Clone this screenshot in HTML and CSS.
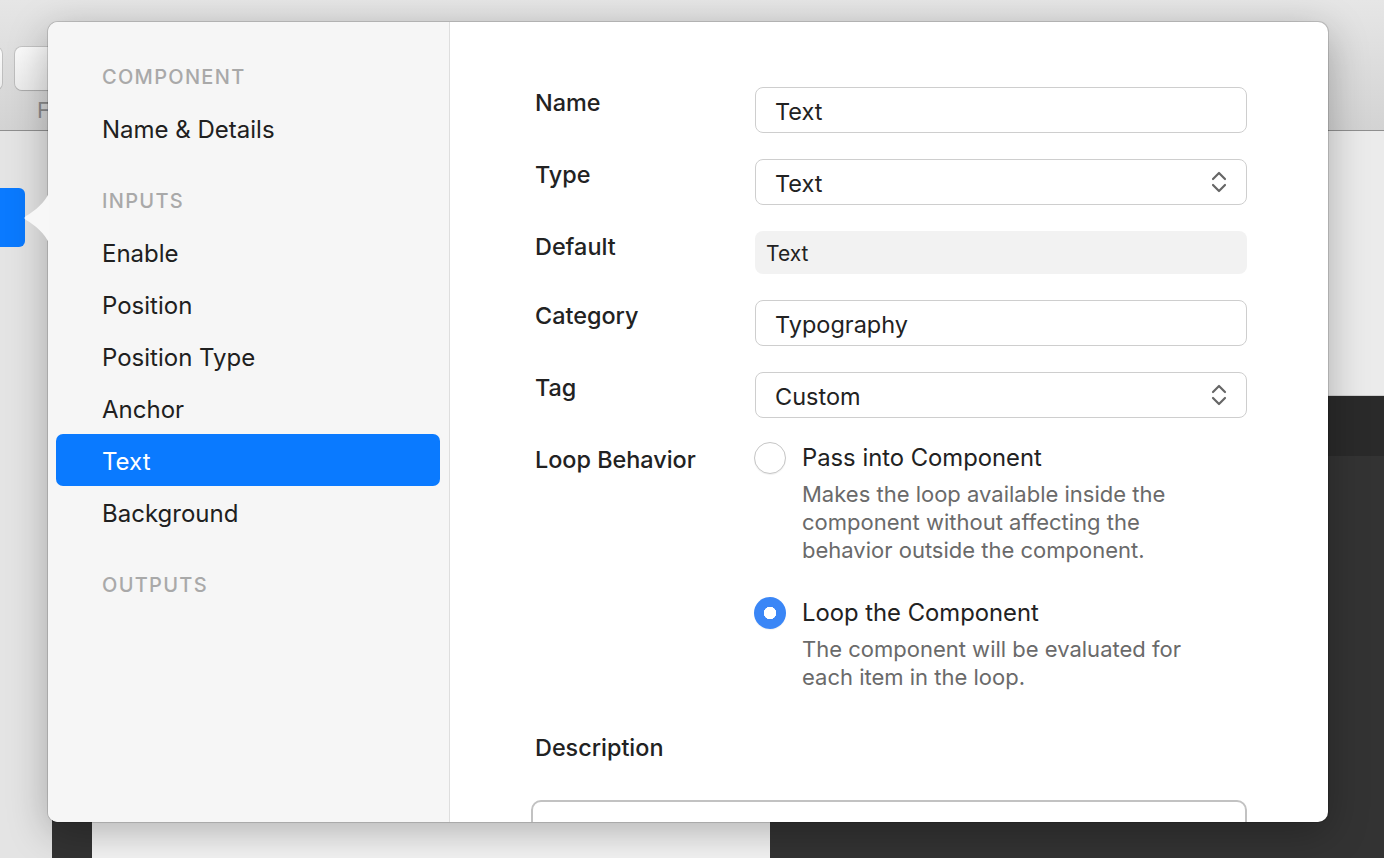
FILE: index.html
```html
<!DOCTYPE html>
<html lang="en">
<head>
<meta charset="utf-8">
<title>Component Inputs</title>
<link rel="stylesheet" href="styles.css">
</head>
<body>
<div class="desk">
  <header class="toolbar">
    <div class="tb-btn tb-edge"></div>
    <div class="tb-group">
      <div class="tb-btn"></div>
      <span class="tb-label">Frame</span>
    </div>
  </header>
  <div class="main">
    <aside class="rail"><div class="rail-tab"></div></aside>
    <div class="stage"><div class="canvas"></div></div>
    <div class="inspector">
      <div class="insp-top"></div>
      <div class="insp-head"></div>
      <div class="insp-body"></div>
    </div>
  </div>
</div>

<svg class="pop-arrow" width="26" height="50" viewBox="0 0 26 50" aria-hidden="true">
  <path d="M26 0 C22 9 12 18 3 23 Q0 25 3 27 C12 32 22 41 26 50 Z" fill="#f7f7f7"/>
</svg>

<div class="popover">
  <nav class="side">
    <div class="side-head side-head-first">COMPONENT</div>
    <div class="side-item">Name &amp; Details</div>
    <div class="side-head">INPUTS</div>
    <div class="side-item side-item-first">Enable</div>
    <div class="side-item">Position</div>
    <div class="side-item">Position Type</div>
    <div class="side-item">Anchor</div>
    <div class="side-item is-selected">Text</div>
    <div class="side-item">Background</div>
    <div class="side-head">OUTPUTS</div>
  </nav>

  <section class="content">
    <div class="form">
      <div class="label">Name</div>
      <div class="field">Text</div>

      <div class="label">Type</div>
      <div class="field field-select">
        <span>Text</span>
        <svg class="chev" width="16" height="24" viewBox="0 0 16 24" aria-hidden="true">
          <path d="M2 9 L8 3 L14 9 M2 15 L8 21 L14 15" fill="none" stroke="#666" stroke-width="2.2" stroke-linecap="round" stroke-linejoin="round"/>
        </svg>
      </div>

      <div class="label">Default</div>
      <div class="field field-static">Text</div>

      <div class="label">Category</div>
      <div class="field">Typography</div>

      <div class="label">Tag</div>
      <div class="field field-select">
        <span>Custom</span>
        <svg class="chev" width="16" height="24" viewBox="0 0 16 24" aria-hidden="true">
          <path d="M2 9 L8 3 L14 9 M2 15 L8 21 L14 15" fill="none" stroke="#666" stroke-width="2.2" stroke-linecap="round" stroke-linejoin="round"/>
        </svg>
      </div>

      <div class="label">Loop Behavior</div>
      <div class="options">
        <div class="option">
          <span class="radio"></span>
          <div class="opt-text">
            <div class="opt-title">Pass into Component</div>
            <div class="opt-desc">Makes the loop available inside the<br>component without affecting the<br>behavior outside the component.</div>
          </div>
        </div>
        <div class="option option-second">
          <span class="radio radio-on"></span>
          <div class="opt-text">
            <div class="opt-title">Loop the Component</div>
            <div class="opt-desc">The component will be evaluated for<br>each item in the loop.</div>
          </div>
        </div>
      </div>

      <div class="label label-wide">Description</div>
      <div class="textarea"></div>
    </div>
  </section>
</div>
</body>
</html>
```

FILE: styles.css
```css
* { box-sizing: border-box; }

html, body {
  margin: 0;
  padding: 0;
  width: 1384px;
  height: 858px;
  overflow: hidden;
  font-family: "Inter", "Noto Sans", "Liberation Sans", sans-serif;
  color: #222;
}

body { position: relative; background: #e6e6e6; }

/* ---------- background app ---------- */
.desk {
  display: flex;
  flex-direction: column;
  height: 858px;
}

.toolbar {
  height: 131px;
  flex: none;
  display: flex;
  align-items: flex-start;
  padding-top: 47px;
  gap: 13px;
  background: linear-gradient(#e6e6e6, #d3d3d3);
  border-bottom: 1px solid #8f8f8f;
}

.tb-btn {
  width: 130px;
  height: 43px;
  border-radius: 7px;
  background: linear-gradient(#fbfbfb, #ececec);
  box-shadow: 0 0 0 1px rgba(0,0,0,0.12), 0 1px 1px rgba(0,0,0,0.1);
}

.tb-edge { width: 20px; margin-left: -18px; }

.tb-group {
  display: flex;
  flex-direction: column;
}

.tb-label {
  margin-top: 6px;
  padding-left: 22px;
  font-size: 22px;
  line-height: 28px;
  color: #8a8a8a;
}

.main {
  flex: 1;
  display: flex;
}

.rail {
  width: 52px;
  flex: none;
  background: #e4e4e4;
  padding-top: 57px;
}

.rail-tab {
  width: 25px;
  height: 59px;
  background: #0a7aff;
  border-radius: 0 6px 6px 0;
}

.stage {
  width: 718px;
  flex: none;
  background: #333;
  padding-left: 40px;
  display: flex;
}

.canvas { flex: 1; background: #f4f4f4; }

.inspector {
  flex: 1;
  display: flex;
  flex-direction: column;
}

.insp-top { height: 265px; background: #ebebeb; border-bottom: 1px solid #cfcfcf; }
.insp-head { height: 60px; background: #2a2a2a; }
.insp-body { flex: 1; background: #333; }

/* ---------- popover ---------- */
.pop-arrow {
  position: absolute;
  left: 23px;
  top: 193px;
  z-index: 3;
}

.popover {
  position: absolute;
  left: 48px;
  top: 22px;
  width: 1280px;
  height: 800px;
  z-index: 2;
  display: flex;
  border-radius: 10px;
  overflow: hidden;
  background: #fff;
  box-shadow: 0 0 0 1px rgba(0,0,0,0.14), 0 10px 40px rgba(0,0,0,0.28);
}

.side {
  width: 402px;
  flex: none;
  background: #f6f6f6;
  border-right: 1px solid #dedede;
  padding: 34px 9px 0 8px;
  display: flex;
  flex-direction: column;
}

.side-head {
  height: 40px;
  line-height: 42px;
  margin-top: 24px;
  margin-bottom: 8px;
  padding-left: 46px;
  font-size: 20px;
  font-weight: 500;
  letter-spacing: 1.3px;
  color: #a9a9a9;
}

.side-head-first { margin-top: 0; }

.side-item {
  height: 52px;
  line-height: 52px;
  padding-left: 46px;
  font-size: 24px;
  color: #202020;
  border-radius: 7px;
}

.side-item.is-selected {
  background: #0a7aff;
  color: #fff;
  margin-top: -2px;
  margin-bottom: 2px;
  line-height: 56px;
}

.content {
  flex: 1;
  padding: 65px 81px 0 85px;
}

.form {
  display: grid;
  grid-template-columns: 220px 1fr;
  row-gap: 26px;
  align-items: start;
}

.label {
  font-size: 23.4px;
  font-weight: 500;
  line-height: 32px;
  color: #222;
}

.field {
  height: 46px;
  display: flex;
  align-items: center;
  padding: 3px 20px 0 19px;
  border: 1px solid #cecece;
  border-radius: 8px;
  font-size: 23.5px;
  color: #222;
  background: #fff;
}

.field-select { justify-content: space-between; padding-right: 19px; }
.field-select .chev { margin-top: -3px; }
.chev { display: block; }

.field-static {
  height: 43px;
  border: none;
  background: #f2f2f2;
  padding: 2px 12px 0 11px;
  font-size: 21px;
}

.options {
  display: flex;
  flex-direction: column;
}

.option {
  display: grid;
  grid-template-columns: 32px 1fr;
  column-gap: 16px;
  margin-left: -1px;
  margin-top: -2px;
}

.option-second { margin-top: 33px; }

.radio {
  width: 32px;
  height: 32px;
  border-radius: 50%;
  background: #fff;
  border: 1px solid #c6c6c6;
  box-shadow: 0 1px 1px rgba(0,0,0,0.06);
}

.radio-on {
  border: none;
  background: radial-gradient(circle, #fff 0 6px, #3a86f6 6.5px);
}

.opt-title {
  font-size: 23.8px;
  line-height: 32px;
  color: #222;
}

.opt-desc {
  margin-top: 6px;
  font-size: 22px;
  line-height: 28px;
  color: #6a6a6a;
}

.label-wide {
  grid-column: 1 / -1;
  margin-top: 15px;
}

.textarea {
  grid-column: 1 / -1;
  margin-top: 10px;
  margin-left: -4px;
  height: 120px;
  border: 2px solid #c2c2c2;
  border-radius: 10px;
}
```
